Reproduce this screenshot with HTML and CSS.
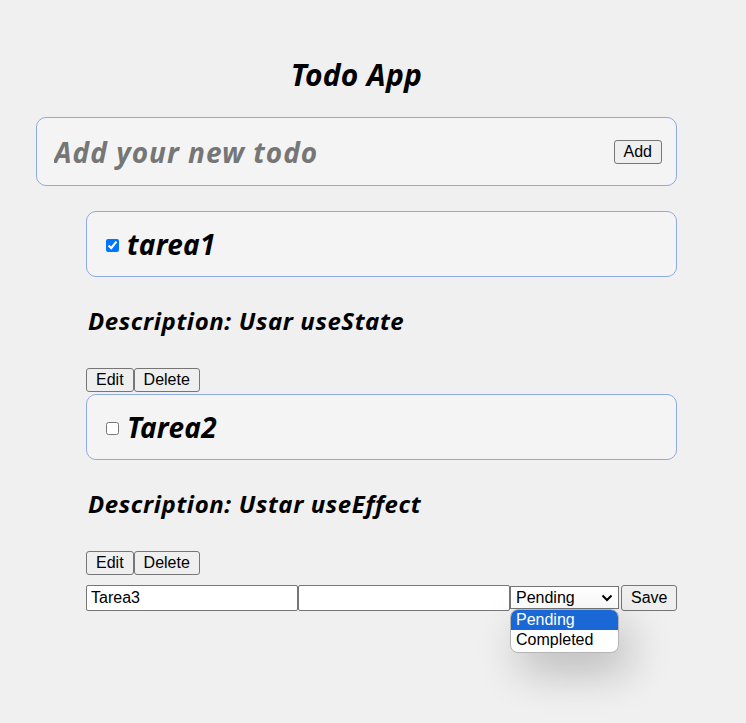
FILE: index.html
```html
<!DOCTYPE html>
<html>
    <head>
        <title>Todo App</title>
        <link rel="stylesheet" href="styles.css">
    </head>
    <body>
        <div class="app">
            <h1 class="title">Todo App</h1>

            <form class="addForm">
                <input class="addInput" type="text" placeholder="Add your new todo">
                <button class="btn" type="button">Add</button>
            </form>

            <div class="todoList">
                <div class="todo">
                    <div class="todoBox">
                        <input type="checkbox" checked>
                        <span class="todoTitle">tarea1</span>
                    </div>
                    <h3 class="todoDesc">Description: Usar useState</h3>
                    <div class="actions">
                        <button class="btn">Edit</button><button class="btn">Delete</button>
                    </div>
                </div>

                <div class="todo">
                    <div class="todoBox">
                        <input type="checkbox">
                        <span class="todoTitle">Tarea2</span>
                    </div>
                    <h3 class="todoDesc">Description: Ustar useEffect</h3>
                    <div class="actions">
                        <button class="btn">Edit</button><button class="btn">Delete</button>
                    </div>
                </div>

                <div class="editRow">
                    <input class="field" type="text" value="Tarea3">
                    <input class="field" type="text">
                    <div class="selectWrap">
                        <select class="statusSelect">
                            <option>Pending</option>
                            <option>Completed</option>
                        </select>
                        <svg class="selectArrow" width="12" height="8" viewBox="0 0 12 8">
                            <path d="M1.5 1.5 L6 6 L10.5 1.5" fill="none" stroke="#000" stroke-width="2"/>
                        </svg>
                    </div>
                    <button class="btn saveBtn">Save</button>

                    <!-- the open list of the select -->
                    <ul class="statusMenu">
                        <li class="statusItem active">Pending</li>
                        <li class="statusItem">Completed</li>
                    </ul>
                </div>
            </div>
        </div>
    </body>
</html>
```

FILE: styles.css
```css
html{
    background: #f0f0f0;
}
body{
    margin: 0;
    min-height: 723px;
    background: #f0f0f0;
    font-family: "Comic Sans MS", "Noto Sans", sans-serif;
}
.app{
    width: 641px;
    margin-left: 36px;
    padding-bottom: 110px;
}
.title{
    margin: 55px 0 22px 0;
    font-size: 30px;
    line-height: 40px;
    letter-spacing: 0.3px;
    font-style: italic;
    font-weight: bold;
    text-align: center;
}

.addForm{
    display: flex;
    align-items: center;
    height: 69px;
    box-sizing: border-box;
    padding: 0 14px 0 17px;
    background: #f4f4f4;
    border: 1px solid #8eaae3;
    border-radius: 10px;
}
.addInput{
    flex: 1;
    border: 0;
    outline: none;
    background: transparent;
    padding: 0;
    font-family: "Comic Sans MS", "Noto Sans", sans-serif;
    font-size: 28px;
    letter-spacing: 1px;
    font-style: italic;
    font-weight: bold;
}
.addInput::placeholder{
    color: #767676;
}

.btn{
    height: 24px;
    box-sizing: border-box;
    padding: 0 9px;
    margin: 0;
    font-family: "Liberation Sans", Arial, sans-serif;
    font-size: 16px;
    color: #000000;
    background: #efefef;
    border: 1px solid #767676;
    border-radius: 3px;
}

.todoList{
    margin: 25px 0 0 50px;
}
.todo{
    margin-bottom: 2px;
}
.todoBox{
    display: flex;
    align-items: center;
    height: 66px;
    box-sizing: border-box;
    padding-left: 19px;
    background: #f4f4f4;
    border: 1px solid #8eaae3;
    border-radius: 10px;
}
.todoBox input{
    width: 13px;
    height: 13px;
    margin: 3px 8px 0 0;
}
.todoTitle{
    font-size: 28px;
    line-height: 36px;
    letter-spacing: 0.3px;
    font-style: italic;
    font-weight: bold;
}
.todoDesc{
    margin: 30px 0 33px 2px;
    font-size: 24px;
    line-height: 28px;
    letter-spacing: 0.6px;
    font-style: italic;
    font-weight: bold;
}
.actions{
    display: flex;
    height: 24px;
}

.editRow{
    position: relative;
    display: flex;
    align-items: flex-start;
    margin-top: 10px;
}
.field{
    width: 212px;
    height: 26px;
    box-sizing: border-box;
    margin: 0;
    padding: 1px 4px;
    font-family: "Liberation Sans", Arial, sans-serif;
    font-size: 16px;
    background: #ffffff;
    border: 1px solid #767676;
    border-radius: 2px;
}
.selectWrap{
    position: relative;
    margin-top: 1px;
}
.statusSelect{
    appearance: none;
    display: block;
    width: 109px;
    height: 23px;
    box-sizing: border-box;
    margin: 0;
    padding: 0 5px;
    font-family: "Liberation Sans", Arial, sans-serif;
    font-size: 16px;
    color: #000000;
    background: #ffffff;
    border: 1px solid #767676;
    border-radius: 0;
}
.selectArrow{
    position: absolute;
    right: 6px;
    top: 8px;
}
.saveBtn{
    height: 26px;
    width: 57px;
    margin-left: 2px;
}
.statusMenu{
    position: absolute;
    left: 424px;
    top: 24px;
    width: 109px;
    margin: 0;
    padding: 0 0 2px 0;
    list-style: none;
    box-sizing: border-box;
    background: #ffffff;
    border: 1px solid #b4b4b4;
    border-radius: 8px;
    overflow: hidden;
    box-shadow: 10px 18px 44px rgba(0, 0, 0, 0.24);
    font-family: "Liberation Sans", Arial, sans-serif;
    font-size: 16px;
}
.statusItem{
    height: 20px;
    line-height: 20px;
    padding-left: 5px;
}
.statusItem.active{
    background: #1a68d6;
    color: #ffffff;
}
```
